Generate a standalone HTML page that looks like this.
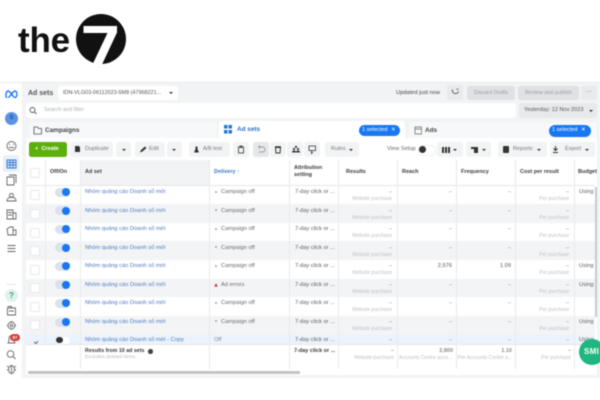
<!DOCTYPE html>
<html><head><meta charset="utf-8">
<style>
html,body{margin:0;padding:0;background:#fff}
#p{position:relative;width:600px;height:400px;overflow:hidden;font-family:"Liberation Sans",sans-serif;font-size:5.7px;color:#444;background:#fff}
#q{position:absolute;left:0;top:0;width:600px;height:400px;filter:blur(.4px)}
#p div,#p span{position:absolute;white-space:nowrap}
.b{background:#f2f3f5;border-radius:2.5px}
.d{background:#e0e1e4;border-radius:2.5px;color:#9a9da3;text-align:center;line-height:14px}
.h{font-weight:bold;color:#3a3a3a;font-size:5.5px}
.r{left:26px;width:569px;height:18.7px}
.g{background:#f3f4f6}
.c{left:30px;width:10px;height:10px;box-sizing:border-box;background:#fff;border:1px solid #e8e9eb;border-radius:2px}
.t{left:55px;width:15px;height:9px;background:#dbe2ec;border-radius:5px}
.k{left:62px;width:8px;height:8px;background:#1877f2;border-radius:50%}
.n{left:85px;color:#4a7cc0}
.o{left:215px;width:2.4px;height:2.4px;background:#9ea1a6;border-radius:50%}
.s{left:221px;color:#6a6a6a}
.a{left:295px;color:#5c5c5c}
.m{color:#8e8e8e;text-align:right;width:30px}
.w{color:#bfc1c5;font-size:5px;text-align:right;width:60px}
.u{left:579px;color:#5c5c5c;width:16px;overflow:hidden}
.v{top:160px;width:1px;height:209px;background:#e9eaec}
.pill{background:#1877f2;color:#fff;border-radius:6px;height:11.5px;line-height:11.5px;font-size:5.6px;text-align:left}
.cr{width:0;height:0;border-left:2.3px solid transparent;border-right:2.3px solid transparent;border-top:2.6px solid #333}
</style></head><body>
<div id="p"><div id="q">
<!-- logo -->
<div style="left:18px;top:18.5px;font-size:35px;line-height:44px;font-weight:bold;color:#111;letter-spacing:-.2px">the</div>
<svg style="position:absolute;left:0;top:0" width="600" height="80">
<circle cx="101" cy="39" r="25" fill="#111"/>
<path d="M83.500 26H117V32.500L102 64.500H92.500L107.500 33H83.500Z" fill="#fff"/>
</svg>

<!-- app bg -->
<div style="left:0;top:82px;width:600px;height:1px;background:#e8e9eb"></div>
<div style="left:22px;top:83px;width:578px;height:295px;background:#f2f3f5"></div>

<!-- top bar -->
<div style="left:28px;top:88.500px;font-size:7px;line-height:9px;font-weight:bold;color:#555">Ad sets</div>
<div style="left:58px;top:86px;width:120px;height:14px;background:#fff;border-radius:3px"></div>
<div style="left:63px;top:86px;line-height:14px;font-size:5.45px;color:#555">IDN-VLG03-06112023-5M8 (47968221...</div>
<div class="cr" style="left:168.500px;top:92px"></div>
<div style="left:396px;top:86px;line-height:14px;font-size:5.7px;color:#444">Updated just now</div>
<div style="left:447px;top:85px;width:16px;height:15px;background:#e9eaec;border-radius:2.5px"></div>
<div class="d" style="left:467px;top:85.500px;width:48px;height:14.500px;font-size:5.4px">Discard Drafts</div>
<div class="d" style="left:518px;top:85.500px;width:61px;height:14.500px;font-size:5.4px">Review and publish</div>
<div style="left:581px;top:85.500px;width:16px;height:14.500px;background:#e9eaec;border-radius:2.500px;text-align:center;line-height:12px;color:#555;font-size:6px">···</div>

<!-- search row -->
<div style="left:26px;top:103px;width:490px;height:15px;background:#fff;border-radius:3px"></div>
<div style="left:44px;top:103px;line-height:15px;font-size:5.5px;color:#aeb0b4">Search and filter</div>
<div style="left:519px;top:103px;width:78px;height:15px;background:#e8e9eb;border-radius:2.500px"></div>
<div style="left:524px;top:103px;line-height:15px;font-size:5.6px;color:#555">Yesterday: 12 Nov 2023</div>
<div class="cr" style="left:589px;top:110px"></div>

<!-- tabs -->
<div style="left:29px;top:122px;width:188px;height:16px;background:#f7f8f9;border-radius:3px 3px 0 0"></div>
<div style="left:45px;top:122.500px;line-height:16px;font-size:6.4px;font-weight:bold;color:#444">Campaigns</div>
<div style="left:219px;top:121px;width:186px;height:18px;background:#fff;border-radius:3px 3px 0 0"></div>
<div style="left:237px;top:121px;line-height:18px;font-size:6.4px;font-weight:bold;color:#2b6fc4">Ad sets</div>
<div class="pill" style="left:359px;top:124.500px;width:41px;text-indent:3px">1 selected <span style="left:32px;top:0;text-indent:0">✕</span></div>
<div style="left:409px;top:122px;width:188px;height:16px;background:#f7f8f9;border-radius:3px 3px 0 0"></div>
<div style="left:425px;top:122.500px;line-height:16px;font-size:6.4px;font-weight:bold;color:#444">Ads</div>
<div class="pill" style="left:549px;top:125px;width:42px;text-indent:3px">1 selected <span style="left:32px;top:0;text-indent:0">✕</span></div>

<!-- toolbar -->
<div style="left:26px;top:138px;width:571px;height:22px;background:#fff"></div>
<div style="left:29px;top:142px;width:38px;height:15px;background:#5cb00c;border-radius:2.500px;color:#fff;font-weight:bold;line-height:15px;font-size:5.6px;text-indent:6px">+&nbsp; Create</div>
<div class="b" style="left:70px;top:142px;width:43px;height:15px"></div>
<div style="left:85px;top:142px;line-height:15px;color:#777">Duplicate</div>
<div class="b" style="left:116px;top:142px;width:15px;height:15px"></div><div class="cr" style="left:121.500px;top:148.500px"></div>
<div class="b" style="left:135px;top:142px;width:30px;height:15px"></div>
<div style="left:149px;top:142px;line-height:15px;color:#777">Edit</div>
<div class="b" style="left:167px;top:142px;width:15px;height:15px"></div><div class="cr" style="left:172px;top:148.500px"></div>
<div class="b" style="left:189px;top:142px;width:41px;height:15px"></div>
<div style="left:203px;top:142px;line-height:15px;color:#777;font-size:5.4px">A/B test</div>
<div class="b" style="left:233px;top:142px;width:16px;height:15px"></div>
<div class="b" style="left:253px;top:142px;width:16px;height:15px;background:#e6e7e9"></div>
<div class="b" style="left:270px;top:142px;width:16px;height:15px"></div>
<div class="b" style="left:287px;top:142px;width:16px;height:15px"></div>
<div class="b" style="left:304px;top:142px;width:16px;height:15px"></div>
<div class="b" style="left:325px;top:142px;width:34px;height:15px"></div>
<div style="left:331px;top:142px;line-height:15px;color:#777">Rules</div><div class="cr" style="left:349px;top:148.500px"></div>
<div style="left:387px;top:142px;line-height:15px;color:#666">View Setup</div>
<div style="left:418px;top:145px;width:16px;height:9px;background:#fff;border:.5px solid #eee;border-radius:5px"></div>
<div style="left:419px;top:146px;width:7px;height:7px;background:#333;border-radius:50%"></div>
<div class="b" style="left:437px;top:142px;width:26px;height:15px"></div>
<div style="left:442px;top:146.500px;width:2.200px;height:6px;background:#333"></div><div style="left:445px;top:146.500px;width:2.200px;height:6px;background:#333"></div><div style="left:448px;top:146.500px;width:2.200px;height:6px;background:#333"></div>
<div class="cr" style="left:453px;top:148.500px"></div>
<div class="b" style="left:466px;top:142px;width:25px;height:15px"></div>
<div style="left:471px;top:146.500px;width:7px;height:2px;background:#333"></div><div style="left:474px;top:148.500px;width:3.500px;height:4px;background:#333"></div>
<div class="cr" style="left:482px;top:148.500px"></div>
<div class="b" style="left:498px;top:142px;width:49px;height:15px"></div>
<div style="left:503px;top:146px;width:6px;height:6.500px;background:#333;border-radius:1px"></div>
<div style="left:513px;top:142px;line-height:15px;color:#777;font-size:5.6px">Reports</div><div class="cr" style="left:537px;top:148.500px"></div>
<div class="b" style="left:550px;top:142px;width:45px;height:15px"></div>
<div style="left:565px;top:142px;line-height:15px;color:#777;font-size:5.6px">Export</div><div class="cr" style="left:585px;top:148.500px"></div>

<!-- table -->
<div style="left:26px;top:160px;width:571px;height:215px;background:#fff"></div>
<div style="left:80px;top:160px;width:129px;height:25px;background:#f2f3f5"></div>
<div style="left:26px;top:185px;width:569px;height:.5px;background:#e6e7e9"></div>
<div class="c" style="top:168px"></div>
<div class="h" style="left:50px;top:168px;line-height:8px">Off/On</div>
<div class="h" style="left:85px;top:168px;line-height:8px">Ad set</div>
<div class="h" style="left:214px;top:168px;line-height:8px;color:#3a77c4">Delivery ↑</div>
<div class="h" style="left:294px;top:165px;line-height:7px">Attribution<br>setting</div>
<div class="h" style="left:346px;top:168px;line-height:8px">Results</div>
<div class="h" style="left:402px;top:168px;line-height:8px">Reach</div>
<div class="h" style="left:461px;top:168px;line-height:8px">Frequency</div>
<div class="h" style="left:520px;top:168px;line-height:8px">Cost per result</div>
<div class="h" style="left:578px;top:168px;line-height:8px">Budget</div>

<!-- row backgrounds -->
<div class="r g" style="top:204px"></div>
<div class="r g" style="top:241.300px"></div>
<div class="r g" style="top:278.700px"></div>
<div class="r g" style="top:316px"></div>
<div class="r" style="top:334.700px;height:9px;background:#ebf3fc"></div>

<!-- R1 -->
<div class="c" style="top:190px"></div><div class="t" style="top:187.500px"></div><div class="k" style="top:188px"></div>
<div class="n" style="top:188px;line-height:8px">Nhóm quảng cáo Doanh số mới</div><div class="o" style="top:190.500px"></div><div class="s" style="top:188px;line-height:8px">Campaign off</div><div class="a" style="top:188px;line-height:8px">7-day click or ...</div>
<div class="m" style="left:362px;top:188px;line-height:8px">–</div><div class="w" style="left:332px;top:196px;line-height:6px">Website purchase</div><div class="m" style="left:422px;top:188px;line-height:8px">–</div><div class="m" style="left:481px;top:188px;line-height:8px">–</div><div class="m" style="left:539px;top:188px;line-height:8px">–</div><div class="w" style="left:509px;top:196px;line-height:6px">Per purchase</div><div class="u" style="top:188px;line-height:8px">Using ca</div>
<!-- R2 -->
<div class="c" style="top:209px"></div><div class="t" style="top:206px"></div><div class="k" style="top:206.500px"></div>
<div class="n" style="top:206.500px;line-height:8px">Nhóm quảng cáo Doanh số mới</div><div class="o" style="top:209px"></div><div class="s" style="top:206.500px;line-height:8px">Campaign off</div><div class="a" style="top:206.500px;line-height:8px">7-day click or ...</div>
<div class="m" style="left:362px;top:206.500px;line-height:8px">–</div><div class="w" style="left:332px;top:214.500px;line-height:6px">Website purchase</div><div class="m" style="left:422px;top:206.500px;line-height:8px">–</div><div class="m" style="left:481px;top:206.500px;line-height:8px">–</div><div class="m" style="left:539px;top:206.500px;line-height:8px">–</div><div class="w" style="left:509px;top:214.500px;line-height:6px">Per purchase</div>
<!-- R3 -->
<div class="c" style="top:227.500px"></div><div class="t" style="top:224.500px"></div><div class="k" style="top:225px"></div>
<div class="n" style="top:225px;line-height:8px">Nhóm quảng cáo Doanh số mới</div><div class="o" style="top:227.500px"></div><div class="s" style="top:225px;line-height:8px">Campaign off</div><div class="a" style="top:225px;line-height:8px">7-day click or ...</div>
<div class="m" style="left:362px;top:225px;line-height:8px">–</div><div class="w" style="left:332px;top:233px;line-height:6px">Website purchase</div><div class="m" style="left:422px;top:225px;line-height:8px">–</div><div class="m" style="left:481px;top:225px;line-height:8px">–</div><div class="m" style="left:539px;top:225px;line-height:8px">–</div><div class="w" style="left:509px;top:233px;line-height:6px">Per purchase</div>
<!-- R4 -->
<div class="c" style="top:246px"></div><div class="t" style="top:243.300px"></div><div class="k" style="top:243.800px"></div>
<div class="n" style="top:243.500px;line-height:8px">Nhóm quảng cáo Doanh số mới</div><div class="o" style="top:246px"></div><div class="s" style="top:243.500px;line-height:8px">Campaign off</div><div class="a" style="top:243.500px;line-height:8px">7-day click or ...</div>
<div class="m" style="left:362px;top:243.500px;line-height:8px">–</div><div class="w" style="left:332px;top:251.500px;line-height:6px">Website purchase</div><div class="m" style="left:422px;top:243.500px;line-height:8px">–</div><div class="m" style="left:481px;top:243.500px;line-height:8px">–</div><div class="m" style="left:539px;top:243.500px;line-height:8px">–</div><div class="w" style="left:509px;top:251.500px;line-height:6px">Per purchase</div>
<!-- R5 -->
<div class="c" style="top:264.500px"></div><div class="t" style="top:261.500px"></div><div class="k" style="top:262px"></div>
<div class="n" style="top:262px;line-height:8px">Nhóm quảng cáo Doanh số mới</div><div class="o" style="top:264.500px"></div><div class="s" style="top:262px;line-height:8px">Campaign off</div><div class="a" style="top:262px;line-height:8px">7-day click or ...</div>
<div class="m" style="left:362px;top:262px;line-height:8px">–</div><div class="w" style="left:332px;top:270px;line-height:6px">Website purchase</div><div class="m" style="left:422px;top:262px;line-height:8px;color:#555">2,576</div><div class="m" style="left:481px;top:262px;line-height:8px;color:#555">1.09</div><div class="m" style="left:539px;top:262px;line-height:8px">–</div><div class="w" style="left:509px;top:270px;line-height:6px">Per purchase</div><div class="u" style="top:262px;line-height:8px">Using ca</div>
<!-- R6 -->
<div class="c" style="top:283px"></div><div class="t" style="top:280.200px"></div><div class="k" style="top:280.700px"></div>
<div class="n" style="top:280.500px;line-height:8px">Nhóm quảng cáo Doanh số mới</div>
<svg style="position:absolute;left:214px;top:283px" width="4" height="4"><path d="M2 0.300L3.800 3.600H.2Z" fill="#c8323c"/></svg>
<div class="s" style="top:280.500px;line-height:8px">Ad errors</div><div class="a" style="top:280.500px;line-height:8px">7-day click or ...</div>
<div class="m" style="left:362px;top:280.500px;line-height:8px">–</div><div class="w" style="left:332px;top:289px;line-height:6px">Website purchase</div><div class="m" style="left:422px;top:280.500px;line-height:8px">–</div><div class="m" style="left:481px;top:280.500px;line-height:8px">–</div><div class="m" style="left:539px;top:280.500px;line-height:8px">–</div><div class="w" style="left:509px;top:289px;line-height:6px">Per purchase</div><div class="u" style="top:280.500px;line-height:8px">Using ca</div>
<!-- R7 -->
<div class="c" style="top:301.500px"></div><div class="t" style="top:298.800px"></div><div class="k" style="top:299.300px"></div>
<div class="n" style="top:299px;line-height:8px">Nhóm quảng cáo Doanh số mới</div><div class="o" style="top:301.500px"></div><div class="s" style="top:299px;line-height:8px">Campaign off</div><div class="a" style="top:299px;line-height:8px">7-day click or ...</div>
<div class="m" style="left:362px;top:299px;line-height:8px">–</div><div class="w" style="left:332px;top:307px;line-height:6px">Website purchase</div><div class="m" style="left:422px;top:299px;line-height:8px">–</div><div class="m" style="left:481px;top:299px;line-height:8px">–</div><div class="m" style="left:539px;top:299px;line-height:8px">–</div><div class="w" style="left:509px;top:307px;line-height:6px">Per purchase</div>
<!-- R8 -->
<div class="c" style="top:320px"></div><div class="t" style="top:317.500px"></div><div class="k" style="top:318px"></div>
<div class="n" style="top:317.500px;line-height:8px">Nhóm quảng cáo Doanh số mới</div><div class="o" style="top:320px"></div><div class="s" style="top:317.500px;line-height:8px">Campaign off</div><div class="a" style="top:317.500px;line-height:8px">7-day click or ...</div>
<div class="m" style="left:362px;top:317.500px;line-height:8px">–</div><div class="w" style="left:332px;top:326px;line-height:6px">Website purchase</div><div class="m" style="left:422px;top:317.500px;line-height:8px">–</div><div class="m" style="left:481px;top:317.500px;line-height:8px">–</div><div class="m" style="left:539px;top:317.500px;line-height:8px">–</div><div class="w" style="left:509px;top:326px;line-height:6px">Per purchase</div><div class="u" style="top:317.500px;line-height:8px">Using ca</div>
<!-- R9 -->
<div class="n" style="top:336px;line-height:8px">Nhóm quảng cáo Doanh số mới - Copy</div>
<div style="left:56px;top:336.500px;width:14px;height:7px;background:#fff;border-radius:4px"></div>
<div style="left:56px;top:336.500px;width:6.500px;height:6.500px;background:#333;border-radius:50%"></div>
<div class="s" style="left:214px;top:336px;line-height:8px;color:#8a8d92">Off</div><div class="a" style="top:336px;line-height:8px">7-day click or ...</div>
<div class="m" style="left:362px;top:336px;line-height:8px">–</div><div class="m" style="left:422px;top:336px;line-height:8px">–</div><div class="m" style="left:481px;top:336px;line-height:8px">–</div><div class="m" style="left:539px;top:336px;line-height:8px">–</div><div class="u" style="top:336px;line-height:8px">Using ca</div>

<!-- footer -->
<div style="left:26px;top:343.500px;width:569px;height:26px;background:#fff;border-top:.5px solid #e6e7e9"></div>
<div class="h" style="left:85px;top:347px;line-height:8px;font-size:5.3px">Results from 10 ad sets</div>
<div style="left:148px;top:349px;width:4.500px;height:4.500px;background:#444;border-radius:50%"></div>
<div style="left:85px;top:355px;line-height:6px;font-size:4.9px;color:#b5b7bb">Excludes deleted items</div>
<div class="h" style="left:294px;top:347px;line-height:8px">7-day click or ...</div>
<div class="m h" style="left:364px;top:347px;line-height:8px">–</div><div class="w" style="left:334px;top:355px;line-height:6px">Website purchase</div>
<div class="m h" style="left:423px;top:347px;line-height:8px">2,800</div><div class="w" style="left:392px;top:355px;line-height:6px">Accounts Centre acco...</div>
<div class="m h" style="left:482px;top:347px;line-height:8px">1.10</div><div class="w" style="left:452px;top:355px;line-height:6px">Per Accounts Centre a...</div>
<div class="m h" style="left:541px;top:347px;line-height:8px">–</div><div class="w" style="left:511px;top:355px;line-height:6px">Per purchase</div>

<!-- column lines -->
<div class="v" style="left:45px;top:160px;height:183px"></div>
<div class="v" style="left:80px"></div>
<div class="v" style="left:209px"></div>
<div class="v" style="left:289px"></div>
<div class="v" style="left:338px"></div>
<div class="v" style="left:397px"></div>
<div class="v" style="left:456px"></div>
<div class="v" style="left:515px"></div>
<div class="v" style="left:574px"></div>

<!-- scrollbars -->
<div style="left:595px;top:187px;width:2px;height:130px;background:#c9cacc"></div>
<div style="left:28px;top:371px;width:272px;height:2.500px;background:#c2c3c6;border-radius:1px"></div>

<!-- SMI bubble -->
<div style="left:579px;top:339px;width:26px;height:26px;background:#1db77f;border-radius:50%"></div>
<div style="left:584px;top:347px;line-height:10px;color:#fff;font-weight:bold;font-size:8px;letter-spacing:.3px">SMI</div>

<!-- sidebar -->
<div style="left:3px;top:155px;width:16px;height:17px;background:#e7f0fb;border-radius:2px"></div>
<div style="left:5px;top:289px;width:13px;height:13px;background:#dff2ec;border-radius:50%"></div>
<div style="left:5px;top:289px;width:13px;line-height:13px;text-align:center;font-size:8px;color:#3a9d7f;font-weight:bold">?</div>
<div style="left:5px;top:112px;width:13px;height:13px;background:#5a93e6;border-radius:50%;color:#1c4f9e;font-size:6px;font-weight:bold;line-height:13px;text-align:center">S</div>
<svg style="position:absolute;left:0;top:0" width="44" height="400" fill="none" stroke="#666" stroke-width=".9">
<path d="M7 97.500C5 97.500 6 91 8 91C10.500 91 13 97.500 15 97.500C17.500 97.500 17.500 91 15 91C12.500 91 10 97.500 8 97.500" stroke="#1877f2" stroke-width="1.400"/>
<circle cx="11.500" cy="146" r="4.500"/><path d="M9 147.500H14M9 144.500H10M13 144.500H14"/>
<path d="M7 160H16V168H7ZM7 162.500H16M7 165H16M10 160V168M13 160V168" stroke="#2f78d2"/>
<path d="M7 177H14V185H7ZM9 175H16V183"/>
<path d="M7 201C7 198 10 197 11.500 197S16 198 16 201ZM9.500 195.500a2 2 0 1 0 4 0a2 2 0 1 0-4 0"/>
<path d="M7 210H13V219H7ZM13 213H16V219H13ZM8 212.500H12M8 215H12"/>
<path d="M7 229L10 227H13V235H8ZM13 230H16V235H13"/>
<path d="M7.500 245.500H15.500M7.500 248.500H15.500M7.500 251.500H15.500"/>
<path d="M7 284.500H16" stroke="#e3e4e6"/>
<path d="M7.500 308H15.500V315H7.500ZM7.500 306.500H11.500V308M9 311H14"/>
<circle cx="11.500" cy="325.500" r="3.500"/><circle cx="11.500" cy="325.500" r="1.300"/><path d="M11.500 321V322M11.500 329V330M7 325.500H8M15 325.500H16"/>
<path d="M8 343H15L14 341V338A2.500 2.500 0 0 0 9 338V341Z"/>
<circle cx="10.500" cy="354" r="3.300"/><path d="M13 356.500L15.500 359"/>
<ellipse cx="11.500" cy="369.500" rx="3" ry="4"/><path d="M8.500 367L7 366M14.500 367L16 366M8.500 370H7M14.500 370H16M11.500 366V373"/>
<circle cx="32.500" cy="110" r="2.500" stroke="#555"/><path d="M34.500 112L36.500 114" stroke="#555"/>
<path d="M34 342L36 343.500L38 341" stroke="#555"/>
</svg>
<div style="left:10px;top:333.500px;width:10px;height:7px;background:#d63a35;border-radius:3.500px;color:#fff;font-size:4.500px;line-height:7px;text-align:center;font-weight:bold">97</div>

<!-- toolbar/tab icons -->
<svg style="position:absolute;left:0;top:0" width="600" height="400" fill="none">
<path d="M34 127H37.500L38.500 128.500H41.500V134H34Z" stroke="#555" stroke-width=".8"/>
<path d="M224 125h3.500v3.500H224zM228.500 125H232v3.500h-3.500zM224 130h3.500v3.500H224zM228.500 130H232v3.500h-3.500z" fill="#1f78d8"/>
<path d="M415 127H421.500V134H415ZM415 129H421.500" stroke="#666" stroke-width=".7"/>
<path d="M75 146H79L80 147.500V152H75Z" fill="#333"/>
<path d="M140 152.500L141 150L145 146.500L146.500 148L142.500 151.500Z" fill="#333"/>
<path d="M194 152.500H199L197.500 149V146.500H195.500V149Z" fill="#333"/>
<path d="M238.500 147H243.500V153H238.500ZM240 146H242V147.500H240Z" stroke="#333" stroke-width=".8"/>
<path d="M258.500 147H262.500A2.500 2.500 0 0 1 262.500 152H259M258.500 147L260 145.700M258.500 147L260 148.300" stroke="#888" stroke-width=".7"/>
<path d="M275.500 147.500H280.500L280 153H276ZM275 146.800H281" stroke="#333" stroke-width="1"/>
<path d="M292 152.500A2 2 0 0 1 296 152.500ZM296 152.500A2 2 0 0 1 300 152.500Z" fill="#333"/><circle cx="294" cy="149" r="1.100" fill="#333"/><circle cx="298" cy="149" r="1.100" fill="#333"/><circle cx="296" cy="146.800" r="1.100" fill="#333"/>
<path d="M309 146H315.500V150.500H309ZM311.500 150.500V153.500L313 152" stroke="#333" stroke-width=".8"/>
<path d="M555.500 146V150M553.500 148.500L555.500 150.500L557.500 148.500M553 152.500H558" stroke="#333" stroke-width="1"/>
<path d="M452.500 89.500A3 3 0 1 0 458.500 91.500M456.500 89L458.500 89.500" stroke="#444" stroke-width=".8"/>
</svg>
</div></div>
</body></html>
